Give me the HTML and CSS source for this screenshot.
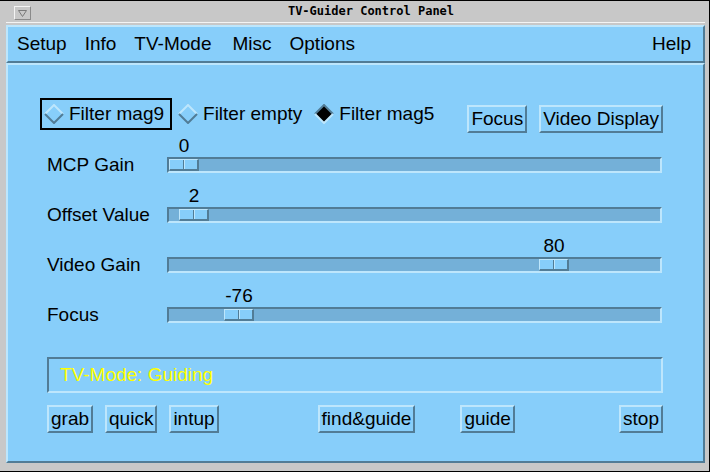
FILE: index.html
```html
<!DOCTYPE html>
<html>
<head>
<meta charset="utf-8">
<title>TV-Guider Control Panel</title>
<link rel="stylesheet" href="styles.css">
</head>
<body>
<div class="frame">
  <div class="titlebar">
    <div class="wm-btn"><svg width="9" height="7" viewBox="0 0 9 7"><path d="M0.5 0.5 H8.5 L4.5 6.5 Z" fill="none" stroke="#7a7a7a" stroke-width="1"/></svg></div>
    <div class="wm-title">TV-Guider Control Panel</div>
  </div>
  <div class="titlesep"></div>
  <div class="app">
    <div class="menubar">
      <span class="menu">Setup</span>
      <span class="menu">Info</span>
      <span class="menu">TV-Mode</span>
      <span class="menu m-misc">Misc</span>
      <span class="menu">Options</span>
      <span class="menu help">Help</span>
    </div>
    <div class="content">
      <div class="radio-row">
        <div class="radio focused">
          <svg class="diamond" viewBox="0 0 20 20"><path d="M1 10 L10 1 L19 10" class="lt"/><path d="M1 10 L10 19 L19 10" class="dk"/></svg>
          <span>Filter mag9</span>
        </div>
        <div class="radio">
          <svg class="diamond" viewBox="0 0 20 20"><path d="M1 10 L10 1 L19 10" class="lt"/><path d="M1 10 L10 19 L19 10" class="dk"/></svg>
          <span>Filter empty</span>
        </div>
        <div class="radio r-last">
          <svg class="diamond" viewBox="0 0 20 20"><polygon points="10,1 19,10 10,19 1,10" class="fill"/><path d="M1 10 L10 1 L19 10" class="dk"/><path d="M1 10 L10 19 L19 10" class="lt"/></svg>
          <span>Filter mag5</span>
        </div>
        <div class="btn btn-focus">Focus</div>
        <div class="btn btn-video">Video Display</div>
      </div>
      <div class="sliders">
        <div class="slider">
          <div class="value-row"><span class="value" style="margin-left:0px">0</span></div>
          <div class="slabel">MCP Gain</div>
          <div class="trough"><div class="thumb" style="margin-left:0px"><i></i><i></i></div></div>
        </div>
        <div class="slider">
          <div class="value-row"><span class="value" style="margin-left:10px">2</span></div>
          <div class="slabel">Offset Value</div>
          <div class="trough"><div class="thumb" style="margin-left:10px"><i></i><i></i></div></div>
        </div>
        <div class="slider">
          <div class="value-row"><span class="value" style="margin-left:370px">80</span></div>
          <div class="slabel">Video Gain</div>
          <div class="trough"><div class="thumb" style="margin-left:370px"><i></i><i></i></div></div>
        </div>
        <div class="slider">
          <div class="value-row"><span class="value" style="margin-left:55px">-76</span></div>
          <div class="slabel">Focus</div>
          <div class="trough"><div class="thumb" style="margin-left:55px"><i></i><i></i></div></div>
        </div>
      </div>
      <div class="status">TV-Mode: Guiding</div>
      <div class="btn-row">
        <div class="btn">grab</div>
        <div class="btn b-quick">quick</div>
        <div class="btn b-intup">intup</div>
        <div class="btn b-find">find&amp;guide</div>
        <div class="btn b-guide">guide</div>
        <div class="btn b-stop">stop</div>
      </div>
    </div>
  </div>
</div>
</body>
</html>
```

FILE: styles.css
```css
html, body {
  margin: 0;
  padding: 0;
}
body {
  width: 710px;
  height: 472px;
  overflow: hidden;
  background: #c8c8c8;
  font-family: "Liberation Sans", Arial, sans-serif;
  font-size: 19px;
  color: #000;
}
.frame {
  width: 709px;
  height: 470px;
  border-top: 1px solid #000;
  border-right: 1px solid #000;
  border-bottom: 1px solid #000;
  background: #c8c8c8;
  display: flex;
  flex-direction: column;
}
.titlebar {
  height: 21px;
  display: flex;
  padding-left: 14px;
}
.wm-btn {
  width: 17px;
  height: 14px;
  margin-top: 5px;
  box-sizing: border-box;
  border: 1px solid;
  border-color: #f4f4f4 #8a8a8a #8a8a8a #f4f4f4;
  display: flex;
  align-items: center;
  justify-content: center;
}
.wm-btn svg {
  display: block;
}
.wm-title {
  flex: 1;
  text-align: center;
  font: bold 12px/21px "DejaVu Sans Mono", "Liberation Mono", monospace;
  padding-left: 2px;
}
.titlesep {
  height: 1px;
  background: #f4f4f4;
  margin: 0 4px 2px 6px;
}
.app {
  margin-left: 6px;
  width: 699px;
  height: 438px;
  display: flex;
  flex-direction: column;
  background: #87cefa;
}
.menubar {
  height: 38px;
  box-sizing: border-box;
  border: 2px solid;
  border-color: #bde6fc #517c96 #517c96 #bde6fc;
  display: flex;
  padding: 0 12px 0 9px;
  gap: 18px;
  line-height: 34px;
}
.menu.m-misc {
  margin-left: 3px;
}
.menu.help {
  margin-left: auto;
}
.content {
  height: 400px;
  box-sizing: border-box;
  border: 2px solid;
  border-color: #bde6fc #517c96 #517c96 #bde6fc;
  padding: 0 40px 0 39px;
  display: flex;
  flex-direction: column;
}
.radio-row {
  margin-top: 33px;
  margin-left: -7px;
  height: 35px;
  display: flex;
  align-items: flex-start;
}
.radio {
  height: 32px;
  box-sizing: border-box;
  border: 2px solid transparent;
  padding: 0 6px 0 2px;
  display: flex;
  align-items: center;
  gap: 5px;
  line-height: 28px;
  white-space: nowrap;
}
.radio + .radio {
  margin-left: 2px;
}
.radio.r-last {
  margin-left: 0;
}
.radio.focused {
  border-color: #000;
}
.diamond {
  width: 20px;
  height: 20px;
  display: block;
}
.diamond .lt {
  fill: none;
  stroke: #bde6fc;
  stroke-width: 2;
}
.diamond .dk {
  fill: none;
  stroke: #517c96;
  stroke-width: 2;
}
.diamond .fill {
  fill: #000;
}
.btn {
  height: 28px;
  box-sizing: border-box;
  border: 2px solid;
  border-color: #bde6fc #517c96 #517c96 #bde6fc;
  padding: 0 2px;
  line-height: 24px;
  white-space: nowrap;
}
.radio-row .btn {
  margin-top: 7px;
}
.btn-focus {
  margin-left: auto;
}
.btn-video {
  margin-left: 12px;
}
.sliders {
  margin-top: 3px;
  display: flex;
  flex-direction: column;
  gap: 13px;
}
.slider {
  display: grid;
  grid-template-columns: 120px 495px;
  grid-template-rows: 20px 16px;
  row-gap: 1px;
}
.value-row {
  grid-column: 2;
  grid-row: 1;
  padding-left: 2px;
  display: flex;
  line-height: 20px;
}
.value {
  width: 30px;
  text-align: center;
}
.slabel {
  grid-column: 1;
  grid-row: 2;
  line-height: 16px;
  white-space: nowrap;
}
.trough {
  grid-column: 2;
  grid-row: 2;
  box-sizing: border-box;
  height: 16px;
  border: 2px solid;
  border-color: #517c96 #bde6fc #bde6fc #517c96;
  background: #74b0d8;
  display: flex;
}
.thumb {
  width: 30px;
  height: 12px;
  box-sizing: border-box;
  border-top: 1px solid #bde6fc;
  border-left: 1px solid #bde6fc;
  border-right: 2px solid #517c96;
  border-bottom: 2px solid #517c96;
  background: #87cefa;
  display: flex;
}
.thumb i {
  flex: 1;
}
.thumb i:first-child {
  border-right: 1px solid #517c96;
}
.thumb i:last-child {
  border-left: 1px solid #bde6fc;
}
.status {
  margin-top: 34px;
  height: 36px;
  box-sizing: border-box;
  border: 2px solid;
  border-color: #517c96 #bde6fc #bde6fc #517c96;
  padding-left: 11px;
  line-height: 32px;
  color: #ffff00;
}
.btn-row {
  margin-top: 12px;
  display: flex;
}
.b-quick, .b-intup {
  margin-left: 12px;
}
.b-find {
  margin-left: 99px;
}
.b-guide {
  margin-left: 45px;
}
.b-stop {
  margin-left: auto;
}
```
